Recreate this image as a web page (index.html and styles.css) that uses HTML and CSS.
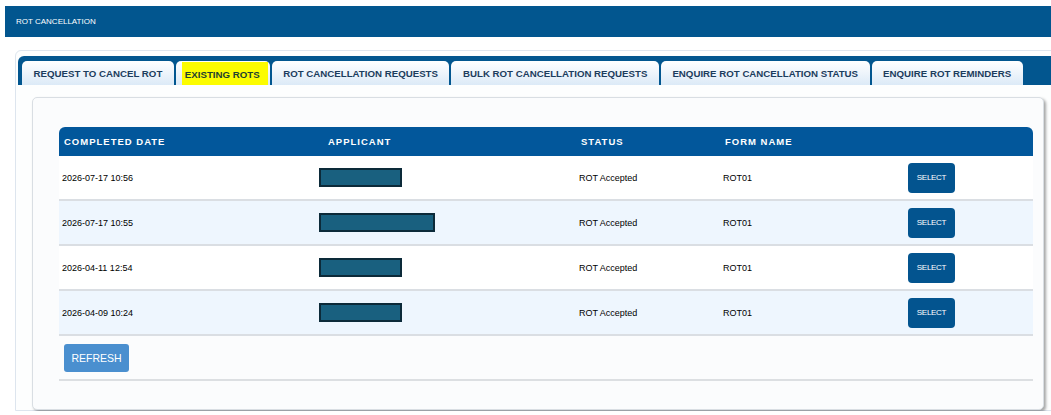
FILE: index.html
```html
<!DOCTYPE html>
<html>
<head>
<meta charset="utf-8">
<link rel="stylesheet" href="styles.css">
</head>
<body>
<div class="topbar">ROT CANCELLATION</div>
<div class="container">
  <div class="tabbar">
    <div class="tab">REQUEST TO CANCEL ROT</div>
    <div class="tab tab-active"><span class="hl">EXISTING ROTS</span></div>
    <div class="tab">ROT CANCELLATION REQUESTS</div>
    <div class="tab">BULK ROT CANCELLATION REQUESTS</div>
    <div class="tab">ENQUIRE ROT CANCELLATION STATUS</div>
    <div class="tab">ENQUIRE ROT REMINDERS</div>
  </div>
  <div class="panel">
    <div class="grid">
      <div class="row head">
        <div class="hc">COMPLETED DATE</div>
        <div class="hc hc-app">APPLICANT</div>
        <div class="hc">STATUS</div>
        <div class="hc">FORM NAME</div>
        <div class="hc"></div>
      </div>
      <div class="row">
        <div class="c">2026-07-17 10:56</div>
        <div class="c"><span class="redact"></span></div>
        <div class="c">ROT Accepted</div>
        <div class="c">ROT01</div>
        <div class="c"><button class="select">SELECT</button></div>
      </div>
      <div class="row alt">
        <div class="c">2026-07-17 10:55</div>
        <div class="c"><span class="redact redact-wide"></span></div>
        <div class="c">ROT Accepted</div>
        <div class="c">ROT01</div>
        <div class="c"><button class="select">SELECT</button></div>
      </div>
      <div class="row">
        <div class="c">2026-04-11 12:54</div>
        <div class="c"><span class="redact"></span></div>
        <div class="c">ROT Accepted</div>
        <div class="c">ROT01</div>
        <div class="c"><button class="select">SELECT</button></div>
      </div>
      <div class="row alt">
        <div class="c">2026-04-09 10:24</div>
        <div class="c"><span class="redact"></span></div>
        <div class="c">ROT Accepted</div>
        <div class="c">ROT01</div>
        <div class="c"><button class="select">SELECT</button></div>
      </div>
    </div>
    <div class="actions">
      <button class="refresh">REFRESH</button>
    </div>
  </div>
</div>
</body>
</html>
```
FILE: styles.css
```css
html, body {
  margin: 0;
  padding: 0;
  background: #ffffff;
  overflow: hidden;
}
body {
  padding-top: 6px;
  font-family: "Liberation Sans", Arial, sans-serif;
  color: #111;
}
.topbar {
  margin-left: 5px;
  height: 31px;
  line-height: 31px;
  background: #02568f;
  color: #fff;
  font-size: 8px;
  padding-left: 11px;
}
.container {
  margin: 13px -12px 0 15px;
  border: 1px solid #dde5ee;
  border-radius: 6px 6px 0 0;
  padding: 5px 0 0 2px;
  background: #fdfefe;
}
.tabbar {
  display: flex;
  gap: 2px;
  height: 29px;
  box-sizing: border-box;
  padding: 5px 0 0 4px;
  background: #02568f;
  border-radius: 6px 0 0 0;
  align-items: stretch;
}
.tab {
  display: flex;
  align-items: center;
  padding: 1px 11.5px 0 11.5px;
  border-radius: 5px 5px 0 0;
  background: linear-gradient(#ffffff, #dceaf7);
  color: #1c3d5e;
  font-weight: bold;
  font-size: 9.7px;
  white-space: nowrap;
}
.tab-active {
  padding: 1px 2px 0 6px;
}
.hl {
  align-self: stretch;
  display: flex;
  align-items: center;
  background: #fcfc00;
  padding: 1px 8px 0 3px;
  color: #1f4030;
}
.panel {
  margin: 12px 0 0 14px;
  width: 1012px;
  box-sizing: border-box;
  border: 1px solid #d9dee3;
  border-radius: 5px;
  background: #fbfcfd;
  box-shadow: 2px 2px 3px rgba(0, 0, 0, 0.35);
  padding: 29px 10px 28px 26px;
}
.grid {
  display: flex;
  flex-direction: column;
}
.row {
  display: grid;
  grid-template-columns: 260px 257px 144px 186px 1fr;
  height: 45px;
  align-items: center;
  border-bottom: 2px solid #dadee3;
  box-sizing: border-box;
  background: #ffffff;
}
.row.alt {
  background: #eef6fe;
}
.row.head {
  height: 29px;
  background: #02579b;
  border-radius: 6px 6px 0 0;
  border-bottom: none;
}
.hc {
  color: #ffffff;
  font-weight: bold;
  font-size: 9.5px;
  letter-spacing: 1px;
  padding-left: 5px;
}
.hc-app {
  padding-left: 9px;
}
.c {
  font-size: 9px;
  padding-left: 3px;
  color: #000;
}
.redact {
  display: block;
  width: 83px;
  height: 19px;
  box-sizing: border-box;
  border: 2px solid #0c2a39;
  background: #19607f;
  margin-left: -3px;
}
.redact-wide {
  width: 116px;
}
.select {
  margin-left: -1px;
  width: 47px;
  height: 30px;
  border: none;
  border-radius: 4px;
  background: #03548f;
  color: #fff;
  font-family: "Liberation Sans", Arial, sans-serif;
  font-size: 8px;
  letter-spacing: -0.3px;
  padding: 0;
}
.actions {
  padding: 8px 0 7px 5px;
  border-bottom: 2px solid #dcdfe2;
}
.refresh {
  display: block;
  width: 65px;
  height: 28px;
  border: none;
  border-radius: 3px;
  background: #4a8fcf;
  color: #fff;
  font-family: "Liberation Sans", Arial, sans-serif;
  font-size: 10.5px;
  padding: 0;
}
```
